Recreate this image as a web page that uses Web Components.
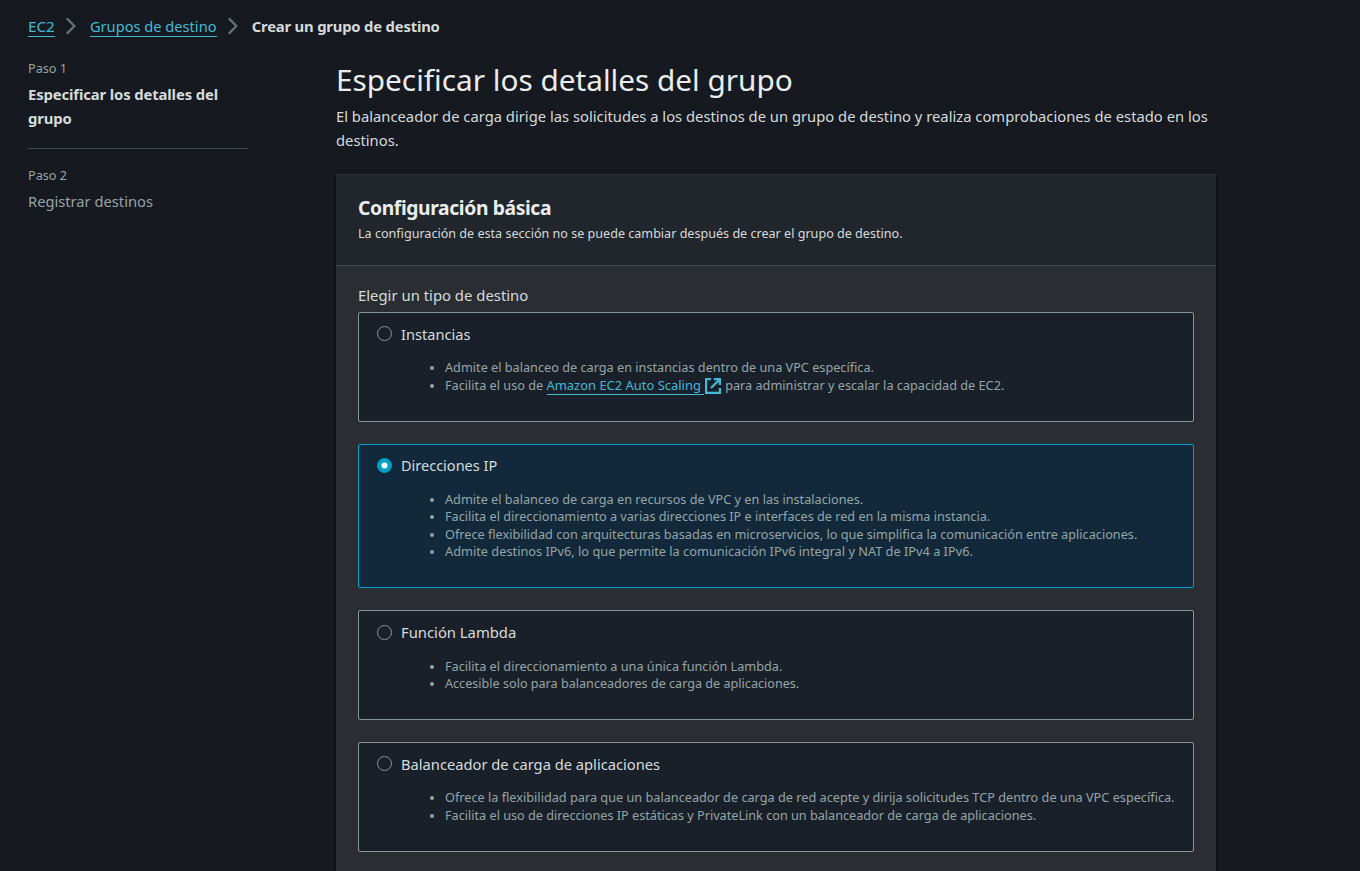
<!DOCTYPE html>
<html lang="es"><head><meta charset="utf-8"><title>Crear un grupo de destino</title>
<style>
html,body{margin:0;background:#16191f;height:871px;overflow:hidden}
body{font-family:"Noto Sans","Open Sans",sans-serif;font-size:14.78px;line-height:24px;color:#d5dbdb}
</style></head><body>
<target-group-page></target-group-page>

<template id="crumbs"><style>
:host{display:flex;align-items:center;height:24px;white-space:nowrap}
::slotted(*){flex:none}
</style><slot></slot></template>

<template id="crumb"><style>
:host{display:flex;align-items:center}
.t{border-bottom:1px solid #44b9d6;color:#44b9d6;line-height:19px;display:block;margin-top:2px}
:host([current]) .t{border:0;color:#d5dbdb;font-weight:700;line-height:24px;margin-top:0;letter-spacing:-.18px}
svg{display:block;margin:0 12.5px 0 10.7px}
:host([current]) svg{display:none}
</style><span class="t"><slot></slot></span><svg width="12" height="18" viewBox="0 0 12 18" fill="none" stroke="#687078" stroke-width="2.2"><path d="M1.8 1.4 9.4 9l-7.6 7.6"/></svg></template>

<template id="step"><style>
:host{display:block}
small{display:block;font-size:12.68px;line-height:18px;color:#95a5a6}
div{line-height:24px;margin-top:5px;color:#95a5a6;font-size:14.7px}
:host([active]) div{font-weight:700;color:#d5dbdb;font-size:14.85px;letter-spacing:-.13px}
:host([active]){border-bottom:1px solid #414750;padding-bottom:18px;margin-bottom:17px}
</style><small><slot name="n"></slot></small><div><slot></slot></div></template>

<template id="panel"><style>
:host{display:block;width:880px;height:720px;background:#2a2e33;box-shadow:0 1px 1px 0 rgba(0,0,0,.3),1px 1px 1px 0 rgba(0,0,0,.3),-1px 1px 1px 0 rgba(0,0,0,.3)}
header{box-sizing:border-box;height:92px;background:#21252c;border-top:1px solid #2b2f35;border-bottom:1px solid #414750;padding:21px 22px 0}
h2{margin:0;font-size:19.3px;line-height:24px;letter-spacing:-.38px;color:#eaeded}
p{margin:5px 0 0;font-size:12.58px;line-height:18px}
.body{padding:17px 22px 0}
</style><header><h2><slot name="title"></slot></h2><p><slot name="sub"></slot></p></header><div class="body"><slot></slot></div></template>

<template id="tile"><style>
:host{display:block;box-sizing:border-box;border:1px solid #879596;border-radius:2px;background:#1a2029;height:110px;margin-bottom:22px;padding:9px 18px 0}
:host([checked]){border-color:#00a1c9;background:#12293b;height:144px}
.head{display:flex;gap:9px;height:24px}
svg{display:block;flex:none;margin-top:calc(4px + var(--r,0px))}
.label{line-height:24px;margin-top:var(--l,0px);color:#d5dbdb}
circle{fill:#1a2029;stroke:#879596}
.dot{display:none}
:host([checked]) .ring{fill:#00a1c9;stroke:#00a1c9}
:host([checked]) .dot{display:block;fill:#fff;stroke:none}
ul{margin:calc(12.4px + var(--u,1px)) 0 0;padding:0 0 0 50px}
</style><div class="head"><svg width="15" height="15" viewBox="0 0 15 15"><circle class="ring" cx="7.5" cy="7.5" r="7"/><circle class="dot" cx="7.5" cy="7.5" r="3"/></svg><span class="label"><slot name="label"></slot></span></div><ul><slot></slot></ul></template>

<template id="item"><style>
:host{display:flex;line-height:17.5px;font-size:12.7px;color:#95a5a6;white-space:nowrap}
i{flex:none;width:4px;height:4px;border-radius:50%;background:#95a5a6;margin:6.8px 11px 0 3px}
</style><i></i><span><slot></slot></span></template>

<template id="ext"><style>
:host{display:inline;color:#44b9d6;font-size:12.95px}
span{border-bottom:1px solid #44b9d6;padding-right:3px}
svg{display:inline-block;vertical-align:0;margin:-4px 1px -4px 1px}
</style><span><slot></slot></span><svg width="16" height="16" viewBox="0 0 16 16" fill="none" stroke="#44b9d6" stroke-width="2.2"><path d="M6 1.1H1.1v13.8h13.8V10M9 1.1h5.9V7M14.9 1.1 6 10"/></svg></template>

<template id="page"><style>
:host{display:block;padding:14px 28px 0}
.cols{display:grid;grid-template-columns:220px 880px;column-gap:88px;margin-top:21px}
main{display:block}
h1{margin:0;padding-top:1px;font-weight:400;font-size:29.75px;line-height:40px;color:#eaeded}
.desc{margin:4px 0 22px;line-height:24px}
.q{line-height:24px;margin-bottom:5px;font-size:14.86px}
</style>
<crumb-trail><crumb-item style="font-size:15.2px">EC2</crumb-item><crumb-item style="font-size:14.64px">Grupos de destino</crumb-item><crumb-item current style="font-size:14.8px">Crear un grupo de destino</crumb-item></crumb-trail>
<div class="cols"><nav><wizard-step active><span slot="n">Paso 1</span>Especificar los detalles del grupo</wizard-step><wizard-step><span slot="n">Paso 2</span>Registrar destinos</wizard-step></nav>
<main><h1>Especificar los detalles del grupo</h1>
<div class="desc">El balanceador de carga dirige las solicitudes a los destinos de un grupo de destino y realiza comprobaciones de estado en los destinos.</div>
<config-panel><span slot="title">Configuración básica</span><span slot="sub">La configuración de esta sección no se puede cambiar después de crear el grupo de destino.</span>
<div class="q">Elegir un tipo de destino</div>
<radio-tile><span slot="label" style="font-size:14.6px">Instancias</span>
<tile-item>Admite el balanceo de carga en instancias dentro de una VPC específica.</tile-item>
<tile-item>Facilita el uso de <external-link>Amazon EC2 Auto Scaling</external-link> <span style="font-size:12.69px">para administrar y escalar la capacidad de EC2.</span></tile-item></radio-tile>
<radio-tile checked style="--u:.5px;--l:-1px"><span slot="label" style="font-size:14.5px">Direcciones IP</span>
<tile-item>Admite el balanceo de carga en recursos de VPC y en las instalaciones.</tile-item>
<tile-item style="font-size:12.66px">Facilita el direccionamiento a varias direcciones IP e interfaces de red en la misma instancia.</tile-item>
<tile-item>Ofrece flexibilidad con arquitecturas basadas en microservicios, lo que simplifica la comunicación entre aplicaciones.</tile-item>
<tile-item style="font-size:12.78px">Admite destinos IPv6, lo que permite la comunicación IPv6 integral y NAT de IPv4 a IPv6.</tile-item></radio-tile>
<radio-tile style="--u:1.5px;--r:1px"><span slot="label" style="font-size:14.8px">Función Lambda</span>
<tile-item>Facilita el direccionamiento a una única función Lambda.</tile-item>
<tile-item style="font-size:12.62px">Accesible solo para balanceadores de carga de aplicaciones.</tile-item></radio-tile>
<radio-tile><span slot="label" style="font-size:14.69px">Balanceador de carga de aplicaciones</span>
<tile-item style="font-size:12.71px">Ofrece la flexibilidad para que un balanceador de carga de red acepte y dirija solicitudes TCP dentro de una VPC específica.</tile-item>
<tile-item style="font-size:12.66px">Facilita el uso de direcciones IP estáticas y PrivateLink con un balanceador de carga de aplicaciones.</tile-item></radio-tile>
</config-panel></main></div></template>
<script>
const define=(name,id)=>customElements.define(name,class extends HTMLElement{
  constructor(){super();this.attachShadow({mode:'open'}).append(document.getElementById(id).content.cloneNode(true));}
});
define('crumb-trail','crumbs');
define('crumb-item','crumb');
define('wizard-step','step');
define('config-panel','panel');
define('radio-tile','tile');
define('tile-item','item');
define('external-link','ext');
define('target-group-page','page');
</script></body></html>
